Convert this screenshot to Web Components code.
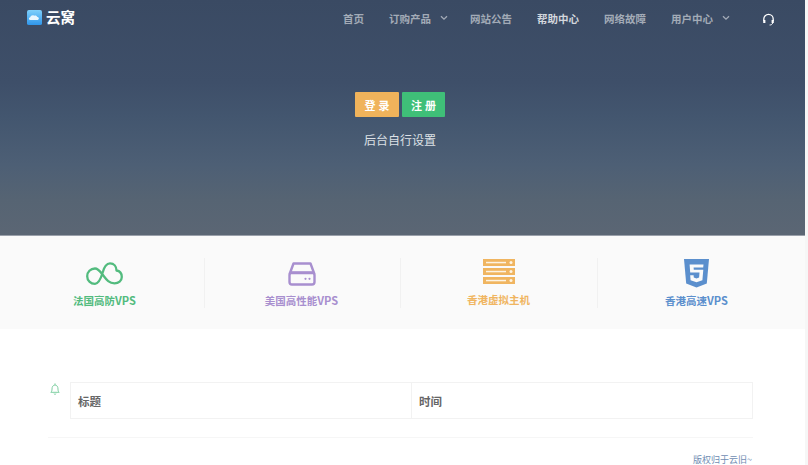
<!DOCTYPE html>
<html lang="zh">
<head>
<meta charset="utf-8">
<title>云窝</title>
<style>
    html, body {
        margin: 0;
        height: 465px;
        overflow: hidden;
        background: #f6f6f6;
        font-family: "Noto Sans CJK SC", "Open Sans", sans-serif;
    }
    #page {
        width: 805px;
        height: 465px;
        background: #fff;
        overflow: hidden;
    }
</style>
</head>
<body>
<div id="page">
    <hero-banner>
        <site-nav></site-nav>
    </hero-banner>
    <feature-band>
        <feature-item style="padding-left:5px" label="法国高防VPS" color="#52bb7e" icon="cloud"></feature-item>
        <feature-item style="padding-right:2px" label="美国高性能VPS" color="#a88fcf" icon="disk"></feature-item>
        <feature-item style="padding-right:1px" label="香港虚拟主机" color="#f0b560" icon="server"></feature-item>
        <feature-item style="padding-right:10px" label="香港高速VPS" color="#5b8fcd" icon="html5"></feature-item>
    </feature-band>
    <notice-board></notice-board>
</div>

<script>
class SiteNav extends HTMLElement {
    constructor() {
        super();
        this.attachShadow({ mode: 'open' });
    }

    connectedCallback() {
        const chevron = `<svg class="chev" width="8" height="6" viewBox="0 0 8 6"><path d="M1 1.2 4 4.2 7 1.2" fill="none" stroke="currentColor" stroke-width="1.3"/></svg>`;
        this.shadowRoot.innerHTML = `
        <style>
            :host {
                display: flex;
                align-items: center;
                height: 36px;
                padding: 0 30px 0 27px;
            }
            .brand {
                display: flex;
                align-items: center;
                gap: 4px;
                color: #fff;
                font-size: 14.5px;
                font-weight: 700;
                margin-right: auto;
                margin-top: -1px;
            }
            .brand span { margin-top: -3px; }
            .links {
                display: flex;
                align-items: center;
                color: #a3abb7;
                font-size: 10.5px;
                font-weight: 700;
                gap: 25px;
            }
            .links span { display: flex; align-items: center; }
            .chev { margin: 0 -3px 0 9px; }
            .on { color: #d3d7dd; }
            .phone { display: block; margin-left: 10px; margin-top: 2px; }
        </style>
        <div class="brand">
            <svg width="15" height="15" viewBox="0 0 16 16">
                <defs><linearGradient id="g" x1="0" y1="0" x2="0" y2="1"><stop offset="0" stop-color="#7fd0fb"/><stop offset="1" stop-color="#2f96ea"/></linearGradient></defs>
                <rect width="16" height="16" rx="2" fill="url(#g)"/>
                <path d="M3.2 10.6c-1.6-.2-1.6-2.6.2-2.8C3.900 5.900 6 5 7.600 6c1.500-.6 3.200.2 3.400 1.600 1.800-.1 2.400 2.700.5 3z" fill="#e9f6fe"/>
            </svg>
            <span>云窝</span>
        </div>
        <div class="links">
            <span>首页</span>
            <span>订购产品${chevron}</span>
            <span>网站公告</span>
            <span class="on">帮助中心</span>
            <span>网络故障</span>
            <span>用户中心${chevron}</span>
            <svg class="phone" width="13" height="13" viewBox="0 0 13 13" fill="none" stroke="#fff">
                <path d="M1.800 8V6a4.700 4.700 0 0 1 9.400 0v2" stroke-width="1.300"/>
                <path d="M2.300 7v3M10.700 7v3" stroke-width="2.200"/>
                <path d="M10.600 10c-.2 1.400-1.400 2-3 2" stroke-width="1"/>
            </svg>
        </div>
        `;
    }
}

class HeroBanner extends HTMLElement {
    constructor() {
        super();
        this.attachShadow({ mode: 'open' });
        this.shadowRoot.innerHTML = `
        <style>
            :host {
                display: block;
                height: 235px;
                border-bottom: 1px solid #9aa0aa;
                background: linear-gradient(180deg, #3a4a63 0%, #3e4f69 35%, #43566f 50%, #4d5f75 70%, #566473 85%, #5b6674 100%);
            }
            .center {
                display: flex;
                flex-direction: column;
                align-items: center;
                padding: 56px 5px 0 0;
            }
            .btns { display: flex; gap: 3px; }
            .btn {
                width: 44px;
                height: 25px;
                box-sizing: border-box;
                display: flex;
                align-items: center;
                justify-content: center;
                color: #fff;
                font-size: 11px;
                font-weight: 700;
                letter-spacing: 3px;
                text-indent: 3px;
                border-radius: 1px;
            }
            .login { background: #f0b35b; }
            .reg { background: #3fbf78; width: 43px; }
            p {
                margin: 14px 0 0;
                color: #dde1e6;
                font-size: 12px;
                line-height: 18px;
            }
        </style>
        <slot></slot>
        <div class="center">
            <div class="btns">
                <div class="btn login">登录</div>
                <div class="btn reg">注册</div>
            </div>
            <p>后台自行设置</p>
        </div>
        `;
    }
}

class FeatureBand extends HTMLElement {
    constructor() {
        super();
        this.attachShadow({ mode: 'open' });
        this.shadowRoot.innerHTML = `
        <style>
            :host {
                display: grid;
                grid-template-columns: 205px 196px 197px 207px;
                height: 93px;
                background: #fafafa;
                box-sizing: border-box;
                padding-top: 22px;
            }
        </style>
        <slot></slot>
        `;
    }
}

const ICONS = {
    cloud: `<svg width="37" height="23" viewBox="0 0 37 23" fill="none" stroke="currentColor" stroke-width="2.300">
        <path d="M16.500 11C18 5 20 1.300 24 1.300 28 1.300 30.500 4.500 30.500 8.500 33.500 9 35.800 11.500 35.800 15 35.800 18.800 32.500 21.300 28.500 21.300 22 21.300 19.500 16 16 11.800 13.500 8.500 12 6.500 9 6.500 4.500 6.500 1.200 10 1.200 14.200 1.200 18.500 4.500 21.800 9 21.800 12.500 21.800 15 16 16.500 11z" stroke-linejoin="round"/>
    </svg>`,
    disk: `<svg width="28" height="24" viewBox="0 0 28 24" fill="none" stroke="currentColor" stroke-width="2.400">
        <path d="M5.500 1.500h17l3.500 9.500H2z" stroke-linejoin="round"/>
        <rect x="1.500" y="10.500" width="25" height="12" rx="2.500"/>
        <circle cx="17.500" cy="16.800" r="1.100" fill="currentColor" stroke="none"/>
        <circle cx="21.500" cy="16.800" r="1.100" fill="currentColor" stroke="none"/>
    </svg>`,
    server: `<svg style="margin-bottom:4px" width="32" height="25" viewBox="0 0 32 25">
        <g fill="currentColor">
            <rect y="0" width="32" height="7"/><rect y="9" width="32" height="7"/><rect y="18" width="32" height="7"/>
        </g>
        <g fill="#fdf3e2">
            <rect x="3" y="2.800" width="20" height="1.500"/><rect x="3" y="11.800" width="20" height="1.500"/><rect x="3" y="20.800" width="20" height="1.500"/>
            <circle cx="28" cy="3.500" r="1.500"/><circle cx="28" cy="12.500" r="1.500"/><circle cx="28" cy="21.500" r="1.500"/>
        </g>
    </svg>`,
    html5: `<svg width="25" height="29" viewBox="0 0 25 29">
        <path d="M0 0h25l-2.200 24.500-10.300 4-10.300-4z" fill="currentColor"/>
        <path d="M19.500 5.500H5.600l.6 8h9.300l-.4 5-2.600 1-2.700-1-.2-2.200H6.200l.4 4.900 5.900 2.100 5.900-2.100.9-10.500H9.800l-.2-2.300h9.600z" fill="#fafafa"/>
    </svg>`
};

class FeatureItem extends HTMLElement {
    constructor() {
        super();
        this.attachShadow({ mode: 'open' });
    }

    connectedCallback() {
        const color = this.getAttribute('color');
        const label = this.getAttribute('label').replace('VPS', '<span class="en">VPS</span>');
        this.shadowRoot.innerHTML = `
        <style>
            :host {
                display: flex;
                flex-direction: column;
                align-items: center;
                box-sizing: border-box;
                height: 50px;
                padding-top: 1px;
                border-right: 1px solid #f1f1f1;
                color: ${color};
                font-size: 10.500px;
                font-weight: 700;
                line-height: 14px;
            }
            :host(:last-child) { border-right: 0; }
            .icon { height: 29px; display: flex; align-items: center; justify-content: center; margin-bottom: 5px; }
            .en { font-size: 11px; }
        </style>
        <div class="icon">${ICONS[this.getAttribute('icon')]}</div>
        <div>${label}</div>
        `;
    }
}

class NoticeBoard extends HTMLElement {
    constructor() {
        super();
        this.attachShadow({ mode: 'open' });
        this.shadowRoot.innerHTML = `
        <style>
            :host {
                display: block;
                padding: 53px 52px 0 48px;
            }
            .top { display: flex; gap: 10px; align-items: flex-start; }
            .bell { display: block; margin: 1px 0 0 2px; }
            table {
                flex: 1;
                border-collapse: collapse;
                table-layout: fixed;
                height: 37px;
            }
            th {
                border: 1px solid #f2f2f2;
                padding: 1px 7px 0;
                text-align: left;
                color: #666;
                font-size: 11.500px;
                font-weight: 700;
            }
            th:first-child { width: 326px; }
            hr {
                border: 0;
                border-top: 1px solid #f6f6f6;
                margin: 18px 0 0;
            }
            .copy {
                margin-top: 15px;
                padding-right: 1px;
                text-align: right;
                color: #6f8db3;
                font-size: 9px;
                line-height: 14px;
            }
        </style>
        <div class="top">
            <svg class="bell" width="10" height="12" viewBox="0 0 10 12" fill="none" stroke="#7fcfa2" stroke-width="1">
                <path d="M.8 9.300c1-.8 1.200-1.800 1.200-3.300 0-2.300 1.200-4 3-4s3 1.700 3 4c0 1.500.2 2.500 1.200 3.300z" stroke-linejoin="round"/>
                <path d="M5 .4v1.500M3.800 10.600c.4.800 2 .8 2.400 0"/>
            </svg>
            <table><tr><th>标题</th><th>时间</th></tr></table>
        </div>
        <hr>
        <div class="copy">版权归于云旧~</div>
        `;
    }
}

customElements.define('site-nav', SiteNav);
customElements.define('hero-banner', HeroBanner);
customElements.define('feature-band', FeatureBand);
customElements.define('feature-item', FeatureItem);
customElements.define('notice-board', NoticeBoard);
</script>
</body>
</html>
